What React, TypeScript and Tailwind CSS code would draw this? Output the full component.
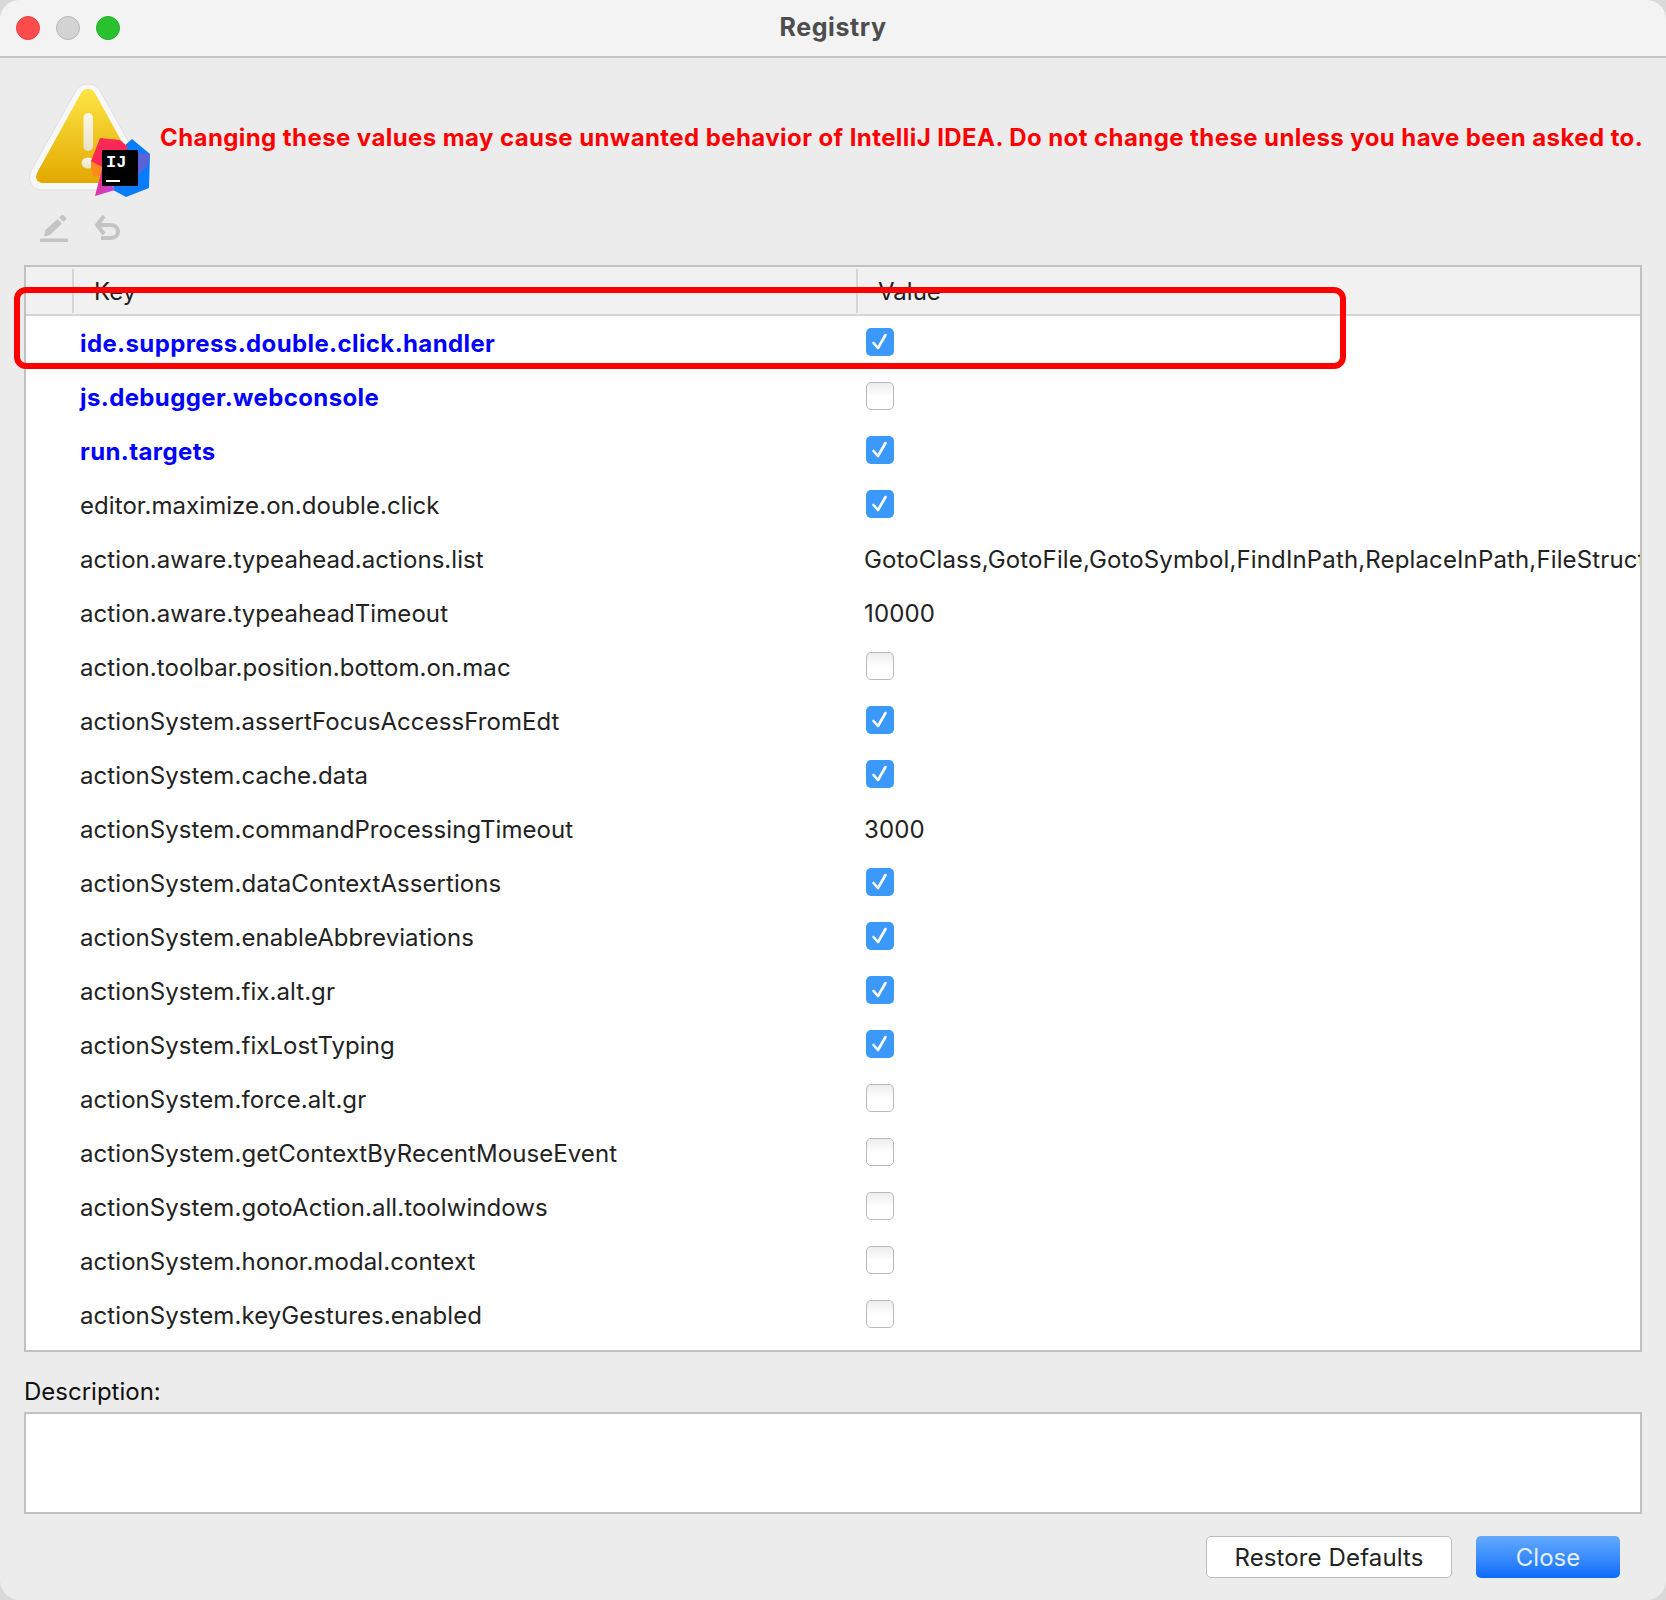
import React from "react";

type Row = { k: string; v: boolean | string; bold?: boolean };
const rows: Row[] = [
  { k: "ide.suppress.double.click.handler", v: true, bold: true },
  { k: "js.debugger.webconsole", v: false, bold: true },
  { k: "run.targets", v: true, bold: true },
  { k: "editor.maximize.on.double.click", v: true },
  { k: "action.aware.typeahead.actions.list", v: "GotoClass,GotoFile,GotoSymbol,FindInPath,ReplaceInPath,FileStructurePopup" },
  { k: "action.aware.typeaheadTimeout", v: "10000" },
  { k: "action.toolbar.position.bottom.on.mac", v: false },
  { k: "actionSystem.assertFocusAccessFromEdt", v: true },
  { k: "actionSystem.cache.data", v: true },
  { k: "actionSystem.commandProcessingTimeout", v: "3000" },
  { k: "actionSystem.dataContextAssertions", v: true },
  { k: "actionSystem.enableAbbreviations", v: true },
  { k: "actionSystem.fix.alt.gr", v: true },
  { k: "actionSystem.fixLostTyping", v: true },
  { k: "actionSystem.force.alt.gr", v: false },
  { k: "actionSystem.getContextByRecentMouseEvent", v: false },
  { k: "actionSystem.gotoAction.all.toolwindows", v: false },
  { k: "actionSystem.honor.modal.context", v: false },
  { k: "actionSystem.keyGestures.enabled", v: false },
];

function Check({ on }: { on: boolean }) {
  if (on)
    return (
      <div className="w-[28px] h-[28px] rounded-[5px] bg-[#3b99fc] flex items-center justify-center">
        <svg width="18" height="20" viewBox="0 0 18 20" fill="none">
          <path d="M2.5 11 L7 16 L14.5 3" stroke="#fff" strokeWidth="2.6" strokeLinecap="round" strokeLinejoin="round" />
        </svg>
      </div>
    );
  return <div className="w-[28px] h-[28px] rounded-[5px] border-[1.5px] border-[#b9b9b9] bg-gradient-to-b from-[#ececec] via-white to-white" />;
}

function WarnIcon() {
  return (
    <svg width="124" height="116" viewBox="0 0 124 116" className="shrink-0">
      <defs>
        <linearGradient id="y" x1="0" y1="0" x2="0" y2="1">
          <stop offset="0" stopColor="#fde545" />
          <stop offset="1" stopColor="#e2a800" />
        </linearGradient>
        <linearGradient id="ex" x1="0" y1="0" x2="0" y2="1">
          <stop offset="0" stopColor="#fbf8ea" />
          <stop offset="1" stopColor="#e9e2c6" />
        </linearGradient>
        <linearGradient id="pk" x1="0" y1="0" x2="1" y2="1">
          <stop offset="0" stopColor="#fe2857" />
          <stop offset="1" stopColor="#b74af7" />
        </linearGradient>
      </defs>
      <path d="M60 1 C54 1 50 4 47 9 L4 86 C-2 97 4 107 15 107 L105 107 C116 107 122 97 116 86 L73 9 C70 4 66 1 60 1 Z" fill="#f8f8f8" stroke="#dedede" strokeWidth="1" />
      <path d="M60 6 C56 6 54 8 52 12 L10 88 C6 95 9 100 15 100 L105 100 C111 100 114 95 110 88 L68 12 C66 8 64 6 60 6 Z" fill="url(#y)" />
      <rect x="55.5" y="30" width="9.5" height="38" rx="4.7" fill="url(#ex)" />
      <ellipse cx="60" cy="80" rx="6.5" ry="5.5" fill="url(#ex)" />
      <path d="M63 78 L72 70 L82 90 L66 94 L63 88 Z" fill="#ff8a1f" />
      <path d="M104 56 L122 71 L121 105 L98 114 L85 107 L88 70 Z" fill="#087cfa" />
      <path d="M122 71 L120 82 L110 92 L108 70 Z" fill="#5b62d8" />
      <path d="M72 55 L92 57 L100 64 L90 84 L74 84 L63 78 Z" fill="#fe2857" />
      <path d="M74 86 L87 107 L67 113 Z" fill="url(#pk)" />
      <rect x="74" y="67" width="36" height="36" fill="#000" />
      <text x="78" y="84" fill="#fff" fontFamily="'Liberation Mono', monospace" fontWeight="700" fontSize="17">IJ</text>
      <rect x="78" y="97" width="14" height="2" fill="#fff" />
    </svg>
  );
}

export default function App() {
  return (
    <div className="relative w-[1666px] h-[1600px] bg-[#d9d9d9] font-['Inter','Liberation_Sans',sans-serif] overflow-hidden">
      <div className="w-full h-full rounded-[20px] bg-[#ececec] overflow-hidden flex flex-col">
        <div className="h-[58px] shrink-0 bg-[#f3f3f3] border-b-2 border-[#c6c6c6] flex items-center relative">
          <div className="flex gap-[16px] pl-[16px]">
            <div className="w-[24px] h-[24px] rounded-full bg-[#ff4b4b] border border-[#e2403f]" />
            <div className="w-[24px] h-[24px] rounded-full bg-[#d3d3d3] border border-[#b7b7b7]" />
            <div className="w-[24px] h-[24px] rounded-full bg-[#28c22f] border border-[#22ab2a]" />
          </div>
          <div className="flex-1 text-center text-[25px] font-bold tracking-[0.6px] text-[#4d4d4d] pr-[120px]">Registry</div>
        </div>

        <div className="flex items-start pl-[28px] pt-[25px] h-[136px] shrink-0">
          <WarnIcon />
          <div className="pt-[37px] ml-[8px] text-[24px] tracking-[0.42px] leading-[36px] font-bold text-[#ff0000] whitespace-nowrap">
            Changing these values may cause unwanted behavior of IntelliJ IDEA. Do not change these unless you have been asked to.
          </div>
        </div>

        <div className="flex items-center pl-[40px] gap-[25px] h-[71px] shrink-0 pb-[4px]">
          <svg width="28" height="28" viewBox="0 0 28 28" fill="#c4c4c4">
            <path d="M4 22.5 L5.5 16 L17.5 5 L22 9.5 L10 21 Z" />
            <path d="M19 3.5 L21.5 1.2 Q22.5 0.5 23.5 1.2 L26 3.6 Q26.7 4.6 26 5.6 L23.5 8 Z" />
            <rect x="0" y="24.5" width="28" height="3.5" />
          </svg>
          <svg width="28" height="28" viewBox="0 0 28 28" fill="none" stroke="#c4c4c4" strokeWidth="4">
            <path d="M5 11 H17 C22 11 25 13.5 25 17.5 C25 21.5 22 24 17 24 H8" />
            <path d="M11 2 L4 11 L11 20" />
          </svg>
        </div>

        <div className="mx-[24px] w-[1618px] h-[1087px] shrink-0 border-2 border-[#c1c1c1] bg-white overflow-hidden">
          <div className="h-[49px] bg-[#f1f1f1] border-b-2 border-[#d4d4d4] flex text-[24px] text-[#1f1f1f]">
            <div className="w-[48px] h-[44px] mt-[2px] border-r-2 border-[#d6d6d6]" />
            <div className="w-[784px] h-[44px] mt-[2px] pl-[20px] leading-[46px] border-r-2 border-[#d6d6d6]">Key</div>
            <div className="pl-[20px] mt-[2px] leading-[46px]">Value</div>
          </div>
          {rows.map((r) => (
            <div key={r.k} className="h-[54px] flex items-center text-[24px]">
              <div className={r.bold ? "w-[838px] pl-[54px] pt-[2px] font-bold tracking-[0.39px] text-[#0000ff]" : "w-[838px] pl-[54px] pt-[2px] tracking-[0.07px] text-[#222222]"}>{r.k}</div>
              {typeof r.v === "string" ? (
                <div className="flex-1 min-w-0 overflow-hidden whitespace-nowrap tracking-[0.14px] text-[#222222] pt-[2px]">{r.v}</div>
              ) : (
                <div className="pl-[2px] pb-[3px]"><Check on={r.v} /></div>
              )}
            </div>
          ))}
        </div>

        <div className="pl-[24px] h-[60px] flex items-center text-[24px] text-[#111111] shrink-0 pt-[20px]">Description:</div>
        <div className="mx-[24px] w-[1618px] h-[102px] shrink-0 border-2 border-[#c1c1c1] bg-white" />

        <div className="flex justify-end gap-[24px] pr-[46px] pt-[22px] text-[24px]">
          <button className="w-[246px] h-[42px] rounded-[5px] border border-[#bcbcbc] bg-white text-[#222222] tracking-[0.12px] pt-[2px]">Restore Defaults</button>
          <button className="w-[144px] h-[42px] rounded-[5px] bg-gradient-to-b from-[#62aafd] to-[#076cfb] text-[#e3eefd] pt-[2px]">Close</button>
        </div>
      </div>

      <div className="absolute left-[14px] top-[287px] w-[1332px] h-[82px] border-[6px] border-[#ff0000] rounded-[12px]" />
    </div>
  );
}
